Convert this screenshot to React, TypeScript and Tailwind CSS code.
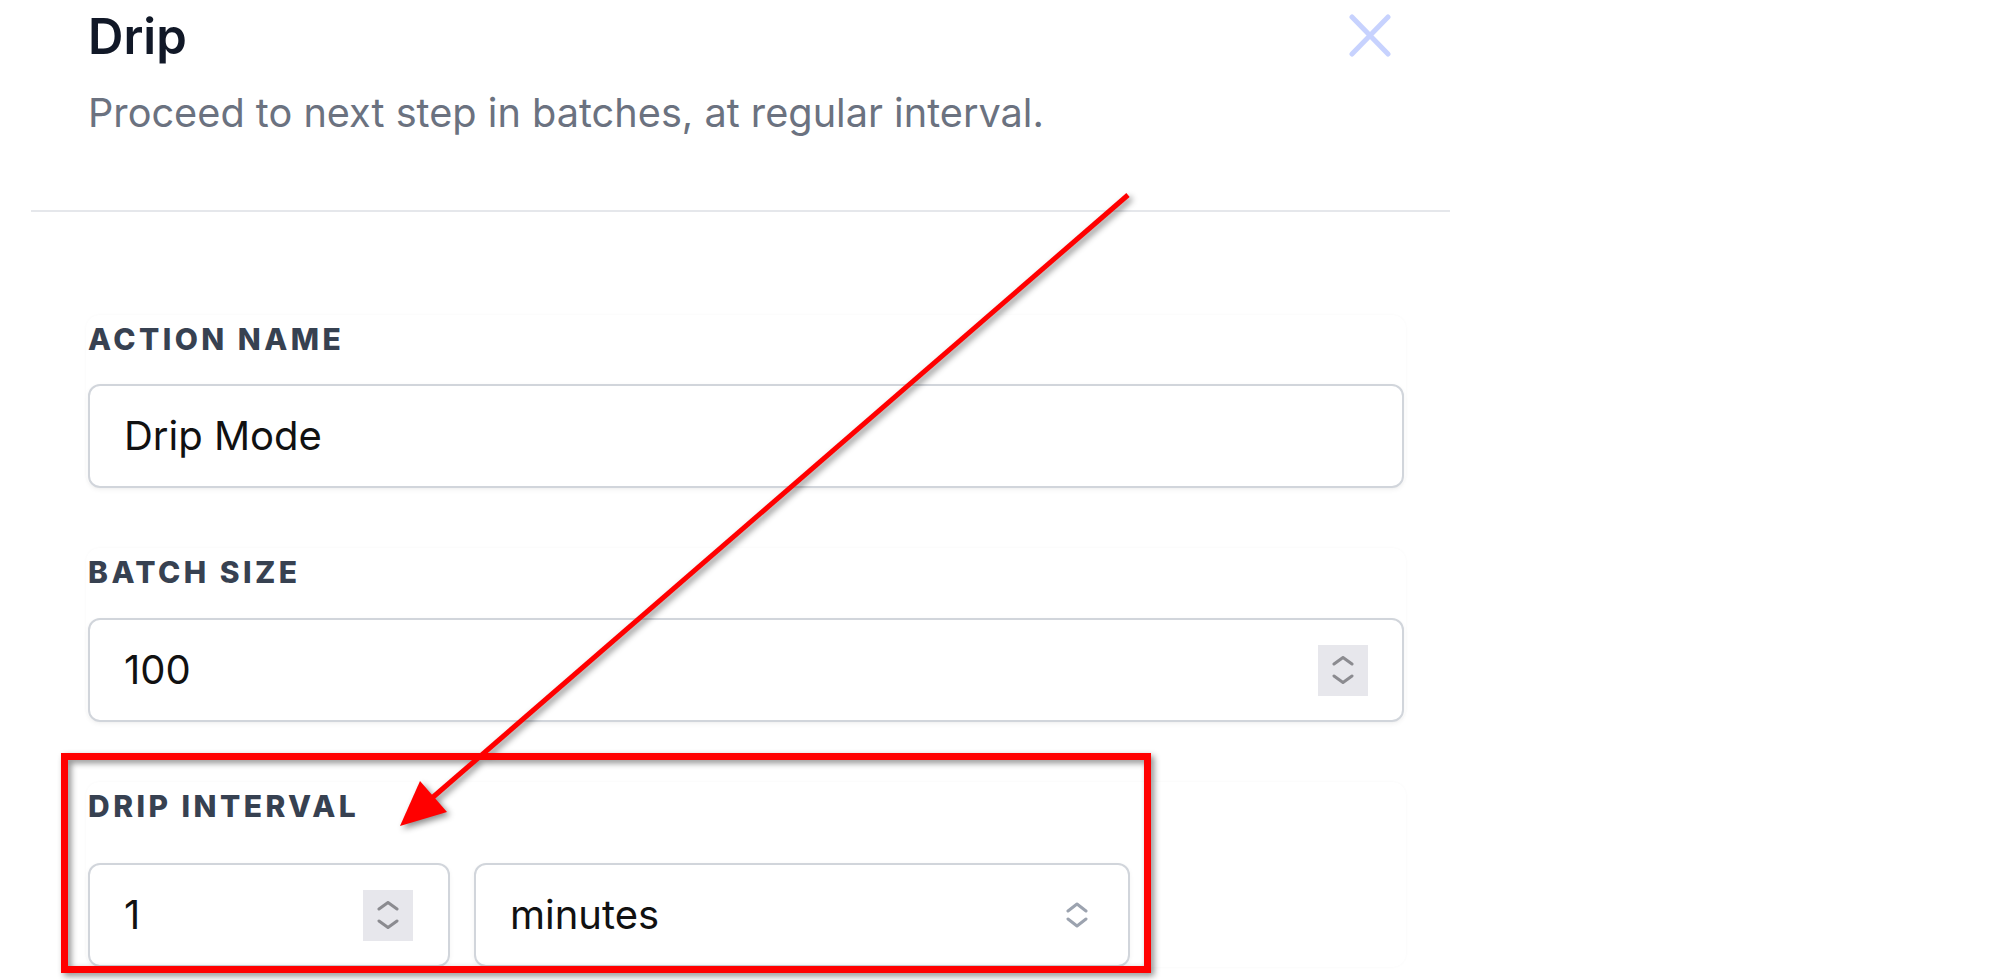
const Chevrons = ({ color }: { color: string }) => (
  <svg width="22" height="26" viewBox="0 0 22 26" fill="none">
    <path d="M2 9 L11 2 L20 9" stroke={color} strokeWidth="3" strokeLinecap="round" strokeLinejoin="round" />
    <path d="M2 17 L11 24 L20 17" stroke={color} strokeWidth="3" strokeLinecap="round" strokeLinejoin="round" />
  </svg>
)

const Spinner = () => (
  <div className="flex h-[51px] w-[50px] items-center justify-center bg-[#e7e7ec]">
    <svg width="22" height="28" viewBox="0 0 22 28" fill="none">
      <path d="M2 8 L11 1.5 L20 8" stroke="#8b8b90" strokeWidth="3" strokeLinecap="round" strokeLinejoin="round" />
      <path d="M2 20 L11 26.5 L20 20" stroke="#8b8b90" strokeWidth="3" strokeLinecap="round" strokeLinejoin="round" />
    </svg>
  </div>
)

const Label = ({ children }: { children: string }) => (
  <div className="h-[40px] text-[30px] font-extrabold uppercase leading-[40px] tracking-[0.115em] text-[#374151]">
    {children}
  </div>
)

const boxClass =
  "flex h-[104px] items-center rounded-[12px] border-2 border-[#d1d5db] bg-white text-[40px] leading-[60px] text-[#111111] shadow-[0_2px_5px_rgba(0,0,0,0.05)]"

export default function App() {
  return (
    <div
      className="relative h-[980px] w-[2000px] overflow-hidden bg-white"
      style={{ fontFamily: "Inter, 'Liberation Sans', sans-serif" }}
    >
      <div className="ml-[31px] w-[1419px]">
        {/* header */}
        <div className="flex items-start justify-between pb-[67px] pl-[57px] pt-[2px]">
          <div>
            <h2 className="text-[49px] font-semibold leading-[70px] text-[#111827]">Drip</h2>
            <p className="mt-[11px] text-[39.7px] leading-[60px] text-[#6b7280]">
              Proceed to next step in batches, at regular interval.
            </p>
          </div>
          <button className="mr-[58px] mt-[11px]">
            <svg width="44" height="44" viewBox="0 0 44 44" fill="none">
              <path d="M4 4 L40 41 M40 4 L4 41" stroke="#c7d2fe" strokeWidth="5" strokeLinecap="round" />
            </svg>
          </button>
        </div>
        <div className="h-[2px] bg-[#e5e7eb]" />

        {/* fields */}
        <div className="flex w-[1375px] flex-col gap-[60px] pl-[55px] pt-[103px]">
          <div className="rounded-[14px] px-[2px] pt-[4px] shadow-[0_0_3px_rgba(0,0,0,0.035)]">
            <Label>Action name</Label>
            <div className={`${boxClass} mt-[25px] pl-[34px]`}>Drip Mode</div>
          </div>

          <div className="rounded-[14px] px-[2px] pt-[4px] shadow-[0_0_3px_rgba(0,0,0,0.035)]">
            <Label>Batch size</Label>
            <div className={`${boxClass} mt-[26px] justify-between pl-[34px] pr-[34px]`}>
              <span>100</span>
              <Spinner />
            </div>
          </div>

          <div className="rounded-[14px] px-[2px] pt-[4px] shadow-[0_0_3px_rgba(0,0,0,0.035)]">
            <Label>Drip interval</Label>
            <div className="mt-[37px] flex gap-[24px]">
              <div className={`${boxClass} w-[362px] justify-between pl-[34px] pr-[35px]`}>
                <span>1</span>
                <Spinner />
              </div>
              <div className={`${boxClass} w-[656px] justify-between pl-[34px] pr-[40px]`}>
                <span>minutes</span>
                <Chevrons color="#9ca3af" />
              </div>
            </div>
          </div>
        </div>
      </div>

      {/* annotation overlay */}
      <svg
        className="pointer-events-none absolute left-0 top-0 drop-shadow-[3px_3px_3px_rgba(0,0,0,0.45)]"
        width="2000"
        height="980"
        viewBox="0 0 2000 980"
        fill="none"
      >
        <rect x="64.5" y="756.5" width="1083" height="213" stroke="#ff0000" strokeWidth="7" />
        <line x1="1128" y1="195" x2="432" y2="798" stroke="#ff0000" strokeWidth="5" />
        <polygon points="400,826 420,781 447,812" fill="#ff0000" />
      </svg>
    </div>
  )
}
